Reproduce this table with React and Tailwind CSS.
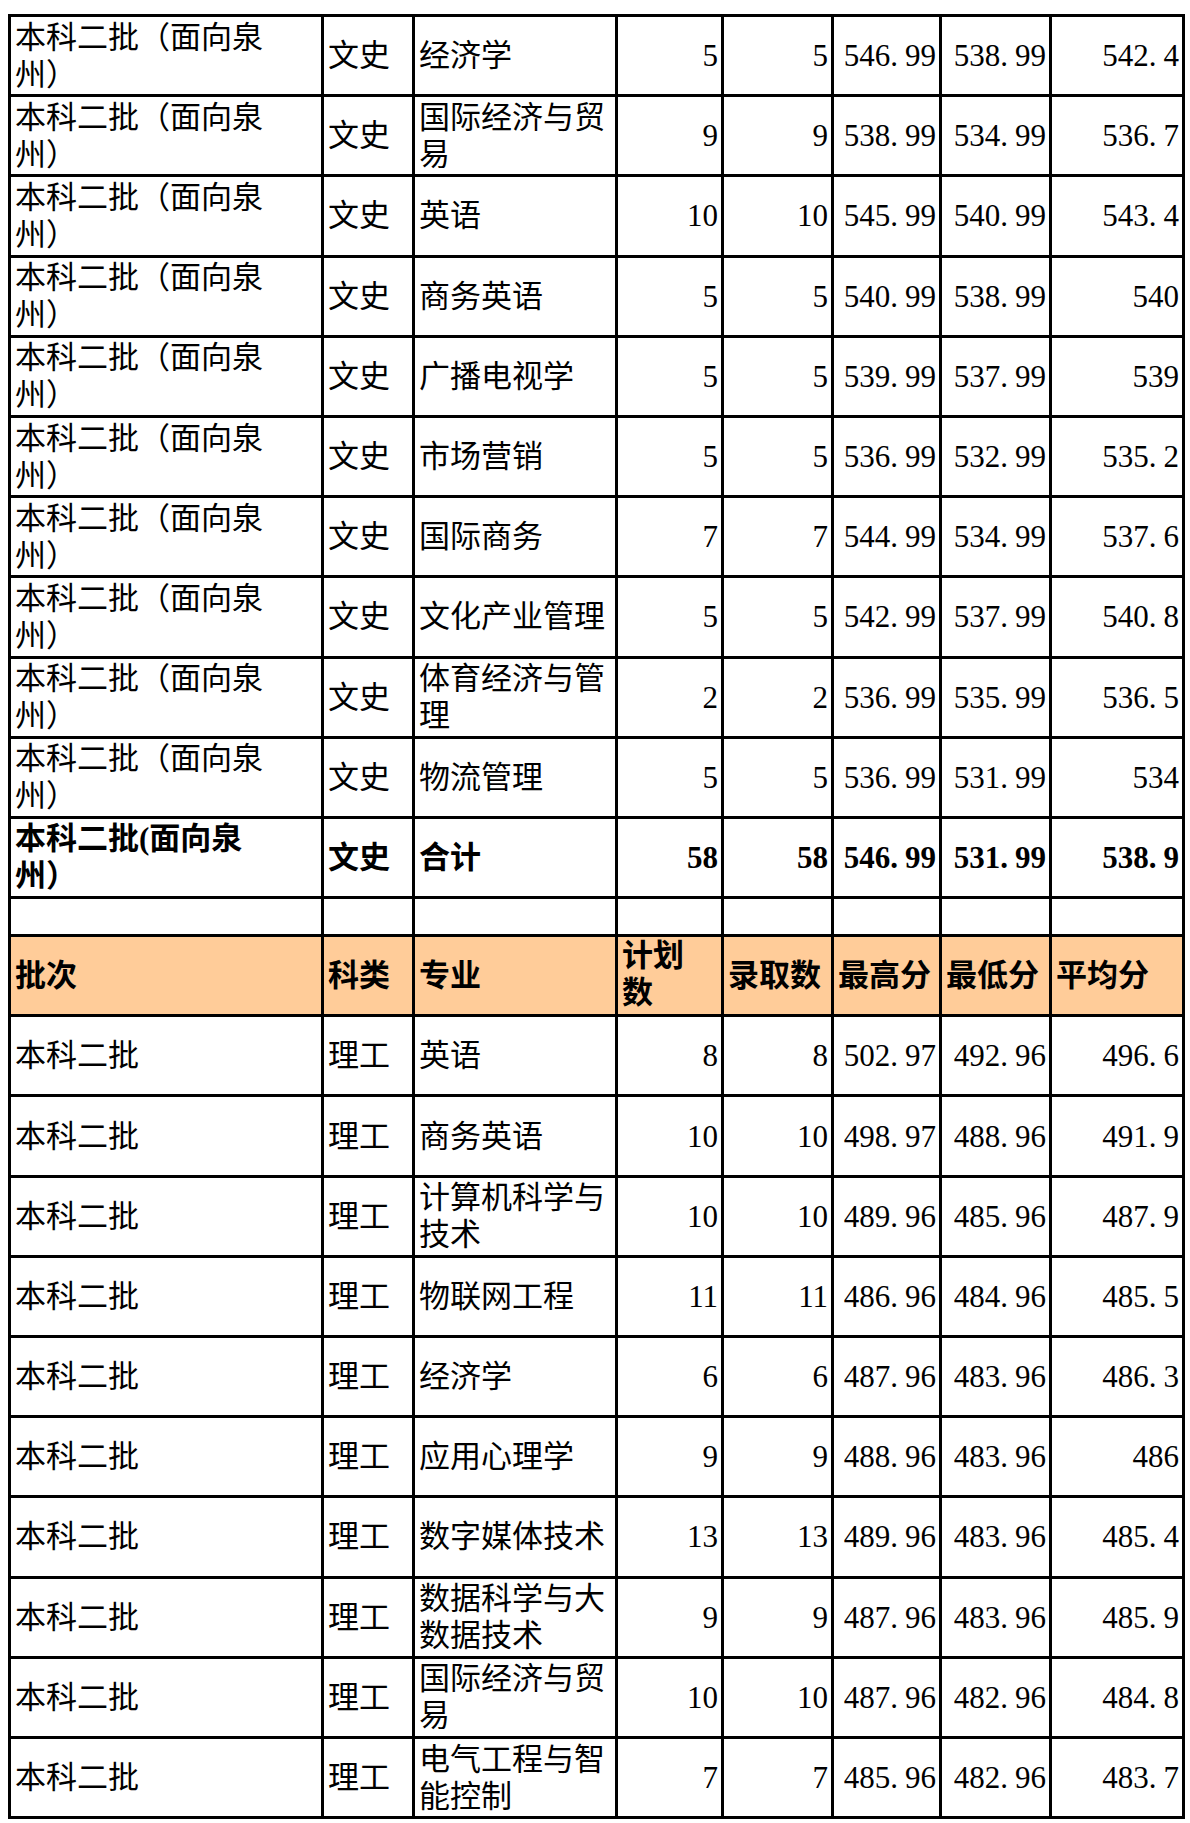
import React from 'react';

const wenRows = [
    ['经济学', 5, 5, '546.99', '538.99', '542.4'],
    ['国际经济与贸易', 9, 9, '538.99', '534.99', '536.7'],
    ['英语', 10, 10, '545.99', '540.99', '543.4'],
    ['商务英语', 5, 5, '540.99', '538.99', '540'],
    ['广播电视学', 5, 5, '539.99', '537.99', '539'],
    ['市场营销', 5, 5, '536.99', '532.99', '535.2'],
    ['国际商务', 7, 7, '544.99', '534.99', '537.6'],
    ['文化产业管理', 5, 5, '542.99', '537.99', '540.8'],
    ['体育经济与管理', 2, 2, '536.99', '535.99', '536.5'],
    ['物流管理', 5, 5, '536.99', '531.99', '534'],
];

const liRows = [
    ['英语', 8, 8, '502.97', '492.96', '496.6'],
    ['商务英语', 10, 10, '498.97', '488.96', '491.9'],
    ['计算机科学与技术', 10, 10, '489.96', '485.96', '487.9'],
    ['物联网工程', 11, 11, '486.96', '484.96', '485.5'],
    ['经济学', 6, 6, '487.96', '483.96', '486.3'],
    ['应用心理学', 9, 9, '488.96', '483.96', '486'],
    ['数字媒体技术', 13, 13, '489.96', '483.96', '485.4'],
    ['数据科学与大数据技术', 9, 9, '487.96', '483.96', '485.9'],
    ['国际经济与贸易', 10, 10, '487.96', '482.96', '484.8'],
    ['电气工程与智能控制', 7, 7, '485.96', '482.96', '483.7'],
];

const cell = 'border-[3px] border-black h-[80.2px] align-middle overflow-hidden';
const txt = `${cell} text-left pl-[4px] pr-[2px]`;
const num = `${cell} text-right pr-[3px] whitespace-nowrap`;

// SimSun-style wide decimal point
const Num = ({ v }) => {
    const s = String(v);
    const i = s.indexOf('.');
    if (i < 0) return s;
    return (
        <>
            {s.slice(0, i)}
            <span className="pr-[7px]">.</span>
            {s.slice(i + 1)}
        </>
    );
};

const DataRow = ({ batch, kind, row, bold }) => {
    const [major, plan, admit, hi, lo, avg] = row;
    return (
        <tr className={bold ? 'font-bold' : ''}>
            <td className={txt}>{batch}</td>
            <td className={txt}>{kind}</td>
            <td className={txt}>{major}</td>
            <td className={num}>{plan}</td>
            <td className={num}>{admit}</td>
            <td className={num}><Num v={hi} /></td>
            <td className={num}><Num v={lo} /></td>
            <td className={num}><Num v={avg} /></td>
        </tr>
    );
};

const quanzhou = (
    <>
        本科二批（面向泉<br />州）
    </>
);

export default function App() {
    return (
        <div className="bg-white min-h-screen pt-[14px] pl-[8px] font-['Liberation_Serif','Noto_Sans_CJK_SC',serif] text-[31px] leading-[37px] text-black">
            <table className="table-fixed border-collapse w-[1174px]">
                <colgroup>
                    <col className="w-[313px]" />
                    <col className="w-[91px]" />
                    <col className="w-[203px]" />
                    <col className="w-[106px]" />
                    <col className="w-[110px]" />
                    <col className="w-[108px]" />
                    <col className="w-[110px]" />
                    <col className="w-[133px]" />
                </colgroup>
                <tbody>
                    {wenRows.map((r, i) => (
                        <DataRow key={'w' + i} batch={quanzhou} kind="文史" row={r} />
                    ))}
                    <DataRow
                        bold
                        batch={<>本科二批(面向泉<br />州）</>}
                        kind="文史"
                        row={['合计', 58, 58, '546.99', '531.99', '538.9']}
                    />
                    <tr>
                        {Array.from({ length: 8 }).map((_, i) => (
                            <td key={i} className="border-[3px] border-black h-[38px]"></td>
                        ))}
                    </tr>
                    <tr className="bg-[#ffcc99] font-bold">
                        <td className={txt}>批次</td>
                        <td className={txt}>科类</td>
                        <td className={txt}>专业</td>
                        <td className={`${txt} align-top`}>计划<br />数</td>
                        <td className={txt}>录取数</td>
                        <td className={txt}>最高分</td>
                        <td className={txt}>最低分</td>
                        <td className={txt}>平均分</td>
                    </tr>
                    {liRows.map((r, i) => (
                        <DataRow key={'l' + i} batch="本科二批" kind="理工" row={r} />
                    ))}
                </tbody>
            </table>
        </div>
    );
}
